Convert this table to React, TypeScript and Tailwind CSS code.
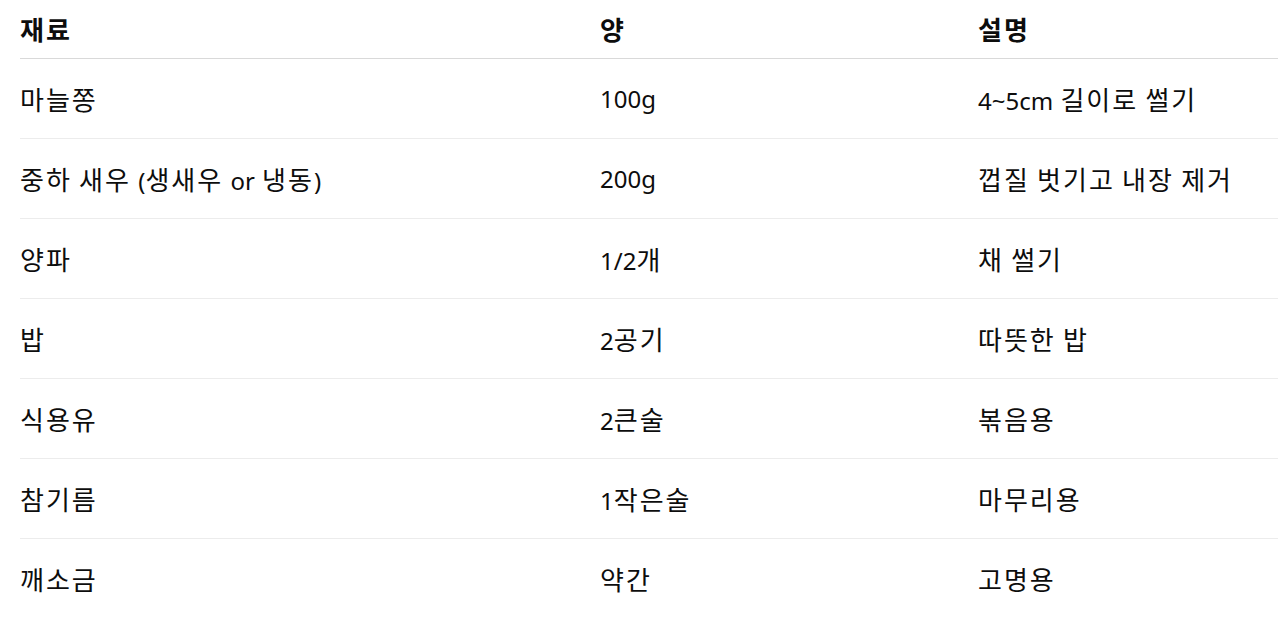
const rows = [
  ["마늘쫑", "100g", "4~5cm 길이로 썰기"],
  ["중하 새우 (생새우 or 냉동)", "200g", "껍질 벗기고 내장 제거"],
  ["양파", "1/2개", "채 썰기"],
  ["밥", "2공기", "따뜻한 밥"],
  ["식용유", "2큰술", "볶음용"],
  ["참기름", "1작은술", "마무리용"],
  ["깨소금", "약간", "고명용"],
];

// Hangul runs get the CJK face a touch larger and spaced out; latin stays in Noto Sans
function Cell({ text }: { text: string }) {
  const parts = text.split(/([\uac00-\ud7a3]+)/).filter(Boolean);
  return (
    <div className="whitespace-nowrap [word-spacing:1px]">
      {parts.map((p, i) =>
        /[\uac00-\ud7a3]/.test(p) ? (
          <span key={i} className="text-[26px] tracking-[2px] font-['Noto_Sans_CJK_KR',sans-serif]">
            {p}
          </span>
        ) : (
          <span key={i}>{p}</span>
        )
      )}
    </div>
  );
}

export default function App() {
  return (
    <div className="min-h-screen bg-white pl-5 text-[#0d0d0d] text-[24px] font-['Noto_Sans','Noto_Sans_CJK_KR',sans-serif]">
      <div className="grid grid-cols-[580px_378px_1fr] h-[59px] items-center border-b border-[#d9d9d9] font-bold">
        <Cell text="재료" />
        <Cell text="양" />
        <Cell text="설명" />
      </div>
      {rows.map((r, i) => (
        <div
          key={i}
          className={`grid grid-cols-[580px_378px_1fr] h-[80px] items-center ${
            i < rows.length - 1 ? "border-b border-[#ececec]" : ""
          }`}
        >
          <Cell text={r[0]} />
          <Cell text={r[1]} />
          <Cell text={r[2]} />
        </div>
      ))}
    </div>
  );
}
